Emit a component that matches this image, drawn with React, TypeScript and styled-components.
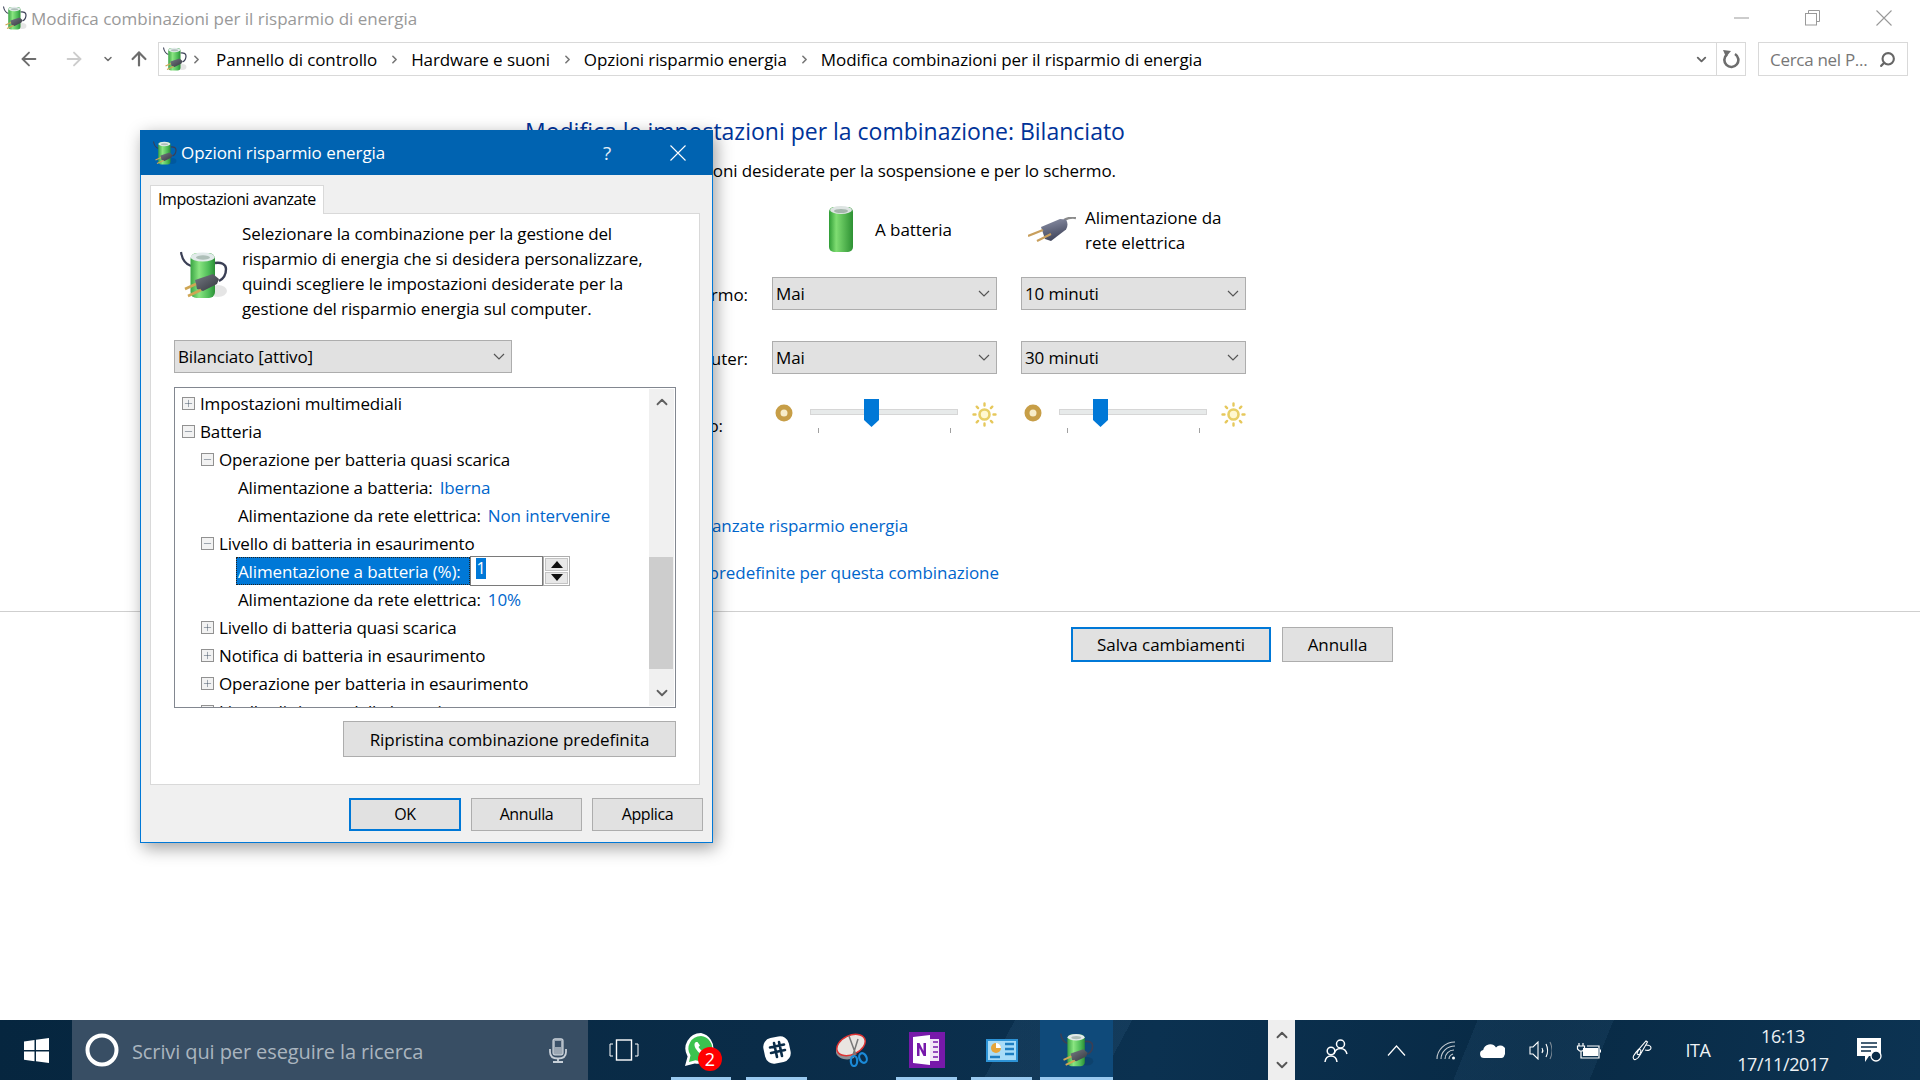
import React from "react";
import styled, { createGlobalStyle } from "styled-components";
import { ArrowLeft, ArrowRight, ArrowUp, ChevronDown, ChevronRight, ChevronUp, Search, Minus, Plus } from "lucide-react";

const Global = createGlobalStyle`
  html, body { margin: 0; padding: 0; background: #fff; }
  body { font-family: "Open Sans", "Noto Sans", sans-serif; color: #000; overflow: hidden; }
  * { box-sizing: border-box; }
`;

const Screen = styled.div`
  position: relative;
  width: 1920px;
  height: 1080px;
  overflow: hidden;
  display: flex;
  flex-direction: column;
  background: #fff;
`;

const ExplorerWindow = styled.div`
  flex: 1;
  min-height: 0;
  display: flex;
  flex-direction: column;
`;

const TitleBar = styled.div`
  height: 36px;
  display: flex;
  align-items: center;
  padding: 0 4px 0 3px;
  gap: 4px;
`;

const TitleText = styled.span`
  font-size: 17px;
  color: #999;
  flex: 1;
`;

const WinCtl = styled.span`
  width: 65px;
  margin-left: 2px;
  display: flex;
  justify-content: center;
`;

const Toolbar = styled.div`
  height: 40px;
  padding-top: 6px;
  display: flex;
  align-items: stretch;
`;

const NavGroup = styled.div`
  width: 158px;
  display: flex;
  align-items: center;
  padding-left: 18px;
`;

const NavSlot = styled.span<{ $w: number; $c?: string }>`
  width: ${(p) => p.$w}px;
  display: flex;
  color: ${(p) => p.$c || "#6d6d6d"};
`;

const Address = styled.div`
  width: 1588px;
  border: 1px solid #d9d9d9;
  display: flex;
  align-items: center;
  padding-left: 4px;
`;

const Crumb = styled.span`
  font-size: 17px;
  letter-spacing: -0.1px;
  margin-right: 11px;
`;

const CrumbSep = styled.span`
  display: flex;
  color: #777;
  margin-right: 10px;
`;

const FirstSep = styled(CrumbSep)`
  margin-left: 3px;
  margin-right: 13px;
`;

const DropSep = styled(CrumbSep)`
  margin-right: 7px;
  color: #666;
`;

const AddressSpacer = styled.span`
  flex: 1;
`;

const RefreshCell = styled.span`
  width: 29px;
  height: 100%;
  border-left: 1px solid #d9d9d9;
  display: flex;
  align-items: center;
  justify-content: center;
`;

const SearchBox = styled.div`
  width: 150px;
  margin-left: 12px;
  border: 1px solid #d9d9d9;
  display: flex;
  align-items: center;
  justify-content: space-between;
  padding: 0 11px;
  font-size: 17px;
  letter-spacing: -0.3px;
  color: #777;
`;

const MirrorIcon = styled.span`
  display: flex;
  transform: scaleX(-1);
  color: #666;
`;

const Content = styled.div`
  padding: 40px 0 0 525px;
  display: flex;
  flex-direction: column;
`;

const Heading = styled.h1`
  margin: 0;
  font-size: 23px;
  line-height: 30px;
  font-weight: 400;
  color: #003399;
`;

const SubHeading = styled.p`
  margin: 13px 0 0;
  font-size: 17px;
  line-height: 24px;
  letter-spacing: -0.12px;
`;

const PlanGrid = styled.div`
  margin: 22px 0 0;
  display: grid;
  grid-template-columns: 223px 225px 225px;
  column-gap: 24px;
  grid-template-rows: 72px 64px 58px 34px;
  align-items: start;
  font-size: 17px;
  letter-spacing: -0.05px;
`;

const RowLabel = styled.div`
  text-align: right;
  height: 33px;
  line-height: 36px;
  white-space: nowrap;
`;

const LowRowLabel = styled(RowLabel)`
  padding-right: 25px;
  margin-top: 9px;
`;

const SourceHead = styled.div`
  display: flex;
  align-items: center;
  height: 48px;
  line-height: 25px;
`;

const IconBox = styled.span<{ $ml: number }>`
  margin-left: ${(p) => p.$ml}px;
  display: flex;
`;

const SourceText = styled.span<{ $ml: number; $mt: number }>`
  margin: ${(p) => p.$mt}px 0 0 ${(p) => p.$ml}px;
`;

const Combo = styled.div<{ $w?: number }>`
  width: ${(p) => (p.$w ? p.$w + "px" : "100%")};
  height: 33px;
  background: #e1e1e1;
  border: 1px solid #adadad;
  display: flex;
  align-items: center;
  justify-content: space-between;
  padding: 0 6px 0 3px;
  font-size: 17px;
  letter-spacing: -0.15px;
  color: #000;
`;

const BrightRow = styled.div`
  display: flex;
  align-items: flex-start;
  height: 34px;
`;

const MoonBox = styled.span`
  display: flex;
  margin: 5px 0 0 3px;
`;

const SunBox = styled.span`
  display: flex;
  margin-top: 3px;
`;

const Track = styled.div`
  position: relative;
  width: 149px;
  height: 6px;
  margin: 10px 14px 0 17px;
  background: #e7eaea;
  border: 1px solid #d6d6d6;
`;

const Thumb = styled.svg<{ $x: number }>`
  position: absolute;
  left: ${(p) => p.$x}px;
  top: -11px;
`;

const Tick = styled.span<{ $x: number }>`
  position: absolute;
  left: ${(p) => p.$x}px;
  top: 18px;
  width: 1px;
  height: 5px;
  background: #a0a0a0;
`;

const LinkLine = styled.a<{ $mt: number }>`
  margin-top: ${(p) => p.$mt}px;
  font-size: 17px;
  line-height: 24px;
  letter-spacing: -0.06px;
  color: #0066cc;
`;

const Divider = styled.div`
  margin-top: 26px;
  height: 1px;
  background: #cfcfcf;
`;

const FooterButtons = styled.div`
  margin: 15px 0 0 1071px;
  display: flex;
  gap: 11px;
`;

const Btn = styled.div<{ $w: number; $h?: number; $primary?: boolean; $small?: boolean }>`
  width: ${(p) => p.$w}px;
  height: ${(p) => p.$h || 33}px;
  background: #e1e1e1;
  border: ${(p) => (p.$primary ? "2px solid #0078d7" : "1px solid #adadad")};
  display: flex;
  align-items: center;
  justify-content: center;
  padding-bottom: ${(p) => (p.$small ? 2 : 0)}px;
  font-size: ${(p) => (p.$small ? 16 : 17)}px;
  letter-spacing: ${(p) => (p.$small ? -0.4 : -0.06)}px;
`;

const Dialog = styled.div`
  position: absolute;
  left: 140px;
  top: 130px;
  width: 573px;
  height: 713px;
  background: #f0f0f0;
  border: 1px solid #0078d7;
  box-shadow: 3px 5px 16px rgba(0, 0, 0, 0.38);
  display: flex;
  flex-direction: column;
`;

const DialogTitle = styled.div`
  height: 45px;
  margin: -1px -1px 0;
  background: #0063b1;
  color: #fff;
  display: flex;
  align-items: center;
  padding-left: 13px;
  gap: 4px;
  flex-shrink: 0;
`;

const DialogTitleText = styled.span`
  font-size: 17px;
  letter-spacing: -0.05px;
  flex: 1;
`;

const DialogHelp = styled.span`
  font-size: 19px;
  width: 20px;
  text-align: center;
  margin-right: 49px;
  color: #e4eef7;
`;

const DialogClose = styled.span`
  display: flex;
  margin-right: 27px;
`;

const TabRow = styled.div`
  margin: 10px 0 0 9px;
  height: 29px;
  display: flex;
  position: relative;
  z-index: 1;
`;

const Tab = styled.div`
  width: 174px;
  height: 29px;
  background: #fff;
  border: 1px solid #d9d9d9;
  border-bottom: none;
  display: flex;
  align-items: center;
  padding: 0 0 3px 7px;
  font-size: 16px;
  letter-spacing: -0.42px;
`;

const TabPanel = styled.div`
  margin: -1px 0 0 9px;
  width: 550px;
  height: 572px;
  background: #fff;
  border: 1px solid #d9d9d9;
  display: flex;
  flex-direction: column;
  padding: 0 23px;
`;

const Intro = styled.div`
  height: 110px;
  margin-top: 7px;
  display: flex;
  align-items: flex-start;
`;

const IntroIcon = styled.div`
  width: 68px;
  padding: 30px 0 0 6px;
  flex-shrink: 0;
`;

const IntroText = styled.p`
  margin: 0;
  font-size: 17px;
  line-height: 25px;
  letter-spacing: -0.11px;
  white-space: nowrap;
`;

const PlanCombo = styled(Combo)`
  margin-top: 9px;
`;

const Tree = styled.div`
  margin-top: 14px;
  height: 321px;
  width: 502px;
  border: 1px solid #828790;
  background: #fff;
  display: flex;
  overflow: hidden;
`;

const TreeList = styled.div`
  flex: 1;
  padding-top: 1px;
  overflow: hidden;
`;

const TreeRow = styled.div<{ $indent: number }>`
  height: 28px;
  display: flex;
  align-items: center;
  padding-left: ${(p) => p.$indent}px;
  font-size: 17px;
  letter-spacing: -0.13px;
  white-space: nowrap;
`;

const Expander = styled.span`
  width: 13px;
  height: 13px;
  border: 1px solid #919191;
  background: #f2f2f2;
  margin-right: 5px;
  display: flex;
  align-items: center;
  justify-content: center;
  color: #34465a;
  flex-shrink: 0;
`;

const Value = styled.span`
  color: #0066cc;
  margin-left: 7px;
`;

const Selected = styled.span`
  background: #0078d7;
  color: #fff;
  outline: 1px dotted #222;
  outline-offset: -1px;
  height: 28px;
  width: 234px;
  margin-left: -2px;
  padding-left: 2px;
  display: flex;
  align-items: center;
`;

const SpinInput = styled.span`
  width: 73px;
  height: 30px;
  border: 1px solid #7a7a7a;
  background: #fff;
  padding: 1px 0 0 5px;
  display: flex;
  align-items: flex-start;
`;

const SelText = styled.span`
  background: #0078d7;
  color: #fff;
  width: 10px;
  height: 21px;
  font-size: 16px;
  line-height: 20px;
  text-align: center;
`;

const Spinner = styled.span`
  width: 27px;
  height: 30px;
  border: 1px solid #adadad;
  padding: 1px;
  display: flex;
  flex-direction: column;
  gap: 1px;
`;

const SpinCell = styled.span`
  flex: 1;
  background: #e8e8e8;
  border: 1px solid #c4c4c4;
  display: flex;
  align-items: center;
  justify-content: center;
`;

const ScrollBar = styled.div`
  width: 25px;
  background: #f0f0f0;
  margin: 1px 1px 1px 0;
  display: flex;
  flex-direction: column;
  align-items: center;
  color: #606060;
`;

const ScrollBtn = styled.span`
  height: 26px;
  display: flex;
  align-items: center;
  justify-content: center;
  flex-shrink: 0;
`;

const ScrollGap = styled.span`
  flex: 1;
  width: 100%;
  padding-top: 142px;
`;

const ScrollThumb = styled.span`
  display: block;
  width: 24px;
  height: 112px;
  background: #cdcdcd;
`;

const RestoreRow = styled.div`
  margin-top: 13px;
  display: flex;
  justify-content: flex-end;
`;

const DialogButtons = styled.div`
  margin: 13px 9px 0 0;
  display: flex;
  justify-content: flex-end;
  gap: 10px;
`;

const Taskbar = styled.div`
  height: 60px;
  flex-shrink: 0;
  background:
    linear-gradient(118deg, transparent 0 52%, rgba(70, 120, 160, 0.14) 52% 58%, transparent 58% 100%),
    linear-gradient(112deg, transparent 0 76%, rgba(70, 120, 160, 0.12) 76% 83%, transparent 83% 100%),
    linear-gradient(100deg, #06263f 0%, #0a2c48 40%, #0b3150 60%, #082a45 80%, #0c3352 100%);
  display: flex;
  align-items: center;
  color: #fff;
  position: relative;
`;

const StartCell = styled.div`
  width: 72px;
  display: flex;
  justify-content: center;
`;

const SearchField = styled.div`
  width: 516px;
  height: 60px;
  background: #384e64;
  display: flex;
  align-items: center;
  padding-left: 13px;
`;

const SearchText = styled.span`
  margin: 2px 0 0 13px;
  font-size: 20px;
  letter-spacing: -0.1px;
  color: #aab5bf;
  flex: 1;
`;

const MicCell = styled.span`
  display: flex;
  margin-right: 21px;
`;

const TaskSlot = styled.div<{ $w: number; $on?: boolean; $line?: boolean }>`
  position: relative;
  width: ${(p) => p.$w}px;
  height: 60px;
  display: flex;
  align-items: center;
  justify-content: center;
  flex-shrink: 0;
  background: ${(p) => (p.$on ? "#0f4a7a" : "transparent")};
  ${(p) =>
    p.$line
      ? `&::after { content: ""; position: absolute; left: 0; right: 0; bottom: 0; height: 3px; background: #99c9ef; }`
      : ""}
`;

const Badge = styled.span`
  position: absolute;
  left: 27px;
  top: 27px;
  width: 24px;
  height: 24px;
  border-radius: 50%;
  background: #f00;
  color: #fff;
  font-size: 18px;
  line-height: 24px;
  text-align: center;
`;

const ScrollStrip = styled.div`
  width: 27px;
  height: 60px;
  margin-left: 155px;
  background: #eee;
  display: flex;
  flex-direction: column;
  align-items: center;
  justify-content: space-between;
  padding: 6px 0;
  color: #555;
  flex-shrink: 0;
`;

const Tray = styled.div`
  flex: 1;
  display: flex;
  align-items: center;
  color: #eef2f5;
  height: 60px;
  padding-left: 11px;
`;

const TrayIcon = styled.span<{ $w: number }>`
  width: ${(p) => p.$w}px;
  display: flex;
  justify-content: center;
  flex-shrink: 0;
`;

const TrayText = styled.span`
  font-size: 18px;
  letter-spacing: -0.5px;
`;

const Clock = styled.div`
  width: 112px;
  flex-shrink: 0;
  text-align: center;
  font-size: 18px;
  line-height: 28px;
  letter-spacing: -0.4px;
`;

const PowerIcon = ({ size = 24, id }: { size?: number; id: string }) => (
  <svg width={size} height={size} viewBox="0 0 48 48">
    <defs>
      <linearGradient id={id} x1="0" x2="1" y1="0" y2="0">
        <stop offset="0" stopColor="#3aa544" />
        <stop offset="0.35" stopColor="#8ae581" />
        <stop offset="0.75" stopColor="#4dbb57" />
        <stop offset="1" stopColor="#2c8f36" />
      </linearGradient>
      <linearGradient id={`${id}p`} x1="0" x2="1" y1="0" y2="1">
        <stop offset="0" stopColor="#777b84" />
        <stop offset="1" stopColor="#33363e" />
      </linearGradient>
    </defs>
    <ellipse cx="38" cy="40" rx="9" ry="6" fill="#000" opacity="0.1" />
    <path d="M1 1c1 7 4 12 10 14" fill="none" stroke="#3a3f55" strokeWidth="2.2" />
    <path d="M35 12c6-1 11 1 11 6 0 6-3 10-7 12" fill="none" stroke="#3a3f55" strokeWidth="2.4" />
    <rect x="10.500" y="2" width="24.500" height="45" rx="6" fill={`url(#${id})`} />
    <ellipse cx="22.700" cy="6" rx="12" ry="4.500" fill="#e2eaea" />
    <ellipse cx="23" cy="6.500" rx="7" ry="2.200" fill="#aebfb8" />
    <path d="M15 29l18-6 6 5-2 5-14 7-6-2z" fill={`url(#${id}p)`} />
    <path d="M5 38l11-5M8 45l13-6" stroke="#cfa654" strokeWidth="2.600" />
  </svg>
);

const BigBattery = () => (
  <svg width="26" height="48" viewBox="0 0 26 48">
    <defs>
      <linearGradient id="bigbat" x1="0" x2="1" y1="0" y2="0">
        <stop offset="0" stopColor="#2e9c35" />
        <stop offset="0.3" stopColor="#7fdd72" />
        <stop offset="1" stopColor="#2d9133" />
      </linearGradient>
    </defs>
    <rect x="1" y="2" width="24" height="45" rx="5" fill="url(#bigbat)" />
    <ellipse cx="13" cy="5" rx="11" ry="4" fill="#dde4e2" />
    <ellipse cx="13" cy="6" rx="7" ry="2" fill="#a5b6ac" />
  </svg>
);

const BigPlug = () => (
  <svg width="48" height="25" viewBox="0 0 48 25">
    <defs>
      <linearGradient id="plugbody" x1="0.2" x2="0.5" y1="0" y2="1">
        <stop offset="0" stopColor="#8a8fa5" />
        <stop offset="1" stopColor="#3d4258" />
      </linearGradient>
    </defs>
    <path d="M36 3c4-2 8-3 12-2" stroke="#8b8b8b" strokeWidth="2.400" fill="none" />
    <path d="M13 10L32 2l6 .5c2 3 2 7 0 10L23 24l-6-2z" fill="url(#plugbody)" />
    <path d="M0 19l15-6M9 24l14-7" stroke="#c89f5d" strokeWidth="2.200" />
  </svg>
);

const Moon = () => (
  <svg width="18" height="18" viewBox="0 0 18 18">
    <circle cx="9" cy="9" r="6" fill="#f7edc9" stroke="#c79e47" strokeWidth="5" />
  </svg>
);

const Sun = () => (
  <svg width="25" height="25" viewBox="0 0 25 25">
    <g stroke="#e6c85c" strokeWidth="2.400" strokeLinecap="round">
      <path d="M12.500 1.500v2M12.500 21.500v2M1.500 12.500h2M21.500 12.500h2M4.700 4.700l1.400 1.400M18.900 18.900l1.400 1.400M4.700 20.300l1.400-1.400M18.900 6.100l1.400-1.400" />
    </g>
    <circle cx="12.500" cy="12.500" r="5" fill="#fff8d0" stroke="#e8cf66" strokeWidth="2.600" />
  </svg>
);

const Slider = ({ x }: { x: number }) => (
  <BrightRow>
    <MoonBox><Moon /></MoonBox>
    <Track>
      <Thumb $x={x} width="15" height="28" viewBox="0 0 15 28">
        <path d="M0 0h15v21l-7.500 7L0 21z" fill="#0078d7" />
      </Thumb>
      <Tick $x={7} />
      <Tick $x={139} />
    </Track>
    <SunBox><Sun /></SunBox>
  </BrightRow>
);

const ComboChevron = () => (
  <svg width="12" height="7" viewBox="0 0 12 7">
    <path d="M1 1l5 5 5-5" fill="none" stroke="#555" strokeWidth="1.200" />
  </svg>
);

const CrossGlyph = ({ color }: { color: string }) => (
  <svg width="16" height="16" viewBox="0 0 16 16">
    <path d="M.5.500l15 15M15.500.500l-15 15" stroke={color} strokeWidth="1.100" fill="none" />
  </svg>
);

const MinGlyph = () => (
  <svg width="15" height="16" viewBox="0 0 15 16">
    <path d="M0 8h15" stroke="#999" />
  </svg>
);

const RestoreGlyph = () => (
  <svg width="15" height="16" viewBox="0 0 15 16" fill="none" stroke="#999">
    <rect x=".5" y="3.500" width="11" height="11.500" />
    <path d="M3.500 3.500V.5h11v11h-3" />
  </svg>
);

const RefreshGlyph = () => (
  <svg width="18" height="20" viewBox="0 0 18 20" fill="none">
    <path d="M5 5.500A7 7 0 1 0 13 5" stroke="#6d6d6d" strokeWidth="2.600" />
    <path d="M1 1l8 1-5 6z" fill="#6d6d6d" />
  </svg>
);

const WinLogo = () => (
  <svg width="25" height="25" viewBox="0 0 25 25" fill="#fff">
    <path d="M0 3.500L10.500 2v10H0zM12 1.800L25 0v12H12zM0 13.500h10.500v9.700L0 21.700zM12 13.500h13V25l-13-1.800z" />
  </svg>
);

const MicGlyph = () => (
  <svg width="18" height="25" viewBox="0 0 18 25">
    <rect x="4" y="0.800" width="10" height="16" rx="2" fill="#9aa6b2" stroke="#c8d0d8" strokeWidth="1.200" />
    <rect x="6" y="3" width="6" height="6" fill="#3b5168" />
    <path d="M1 11v3c0 4 3 6.500 8 6.500s8-2.500 8-6.500v-3" fill="none" stroke="#c8d0d8" strokeWidth="1.800" />
    <path d="M9 20.500V24M4 24h10" stroke="#c8d0d8" strokeWidth="1.800" />
  </svg>
);

const TaskView = () => (
  <svg width="30" height="22" viewBox="0 0 30 22" fill="none" stroke="#fff" strokeWidth="1.400">
    <rect x="7.500" y="1" width="15" height="20" />
    <path d="M4 5H1v12h3M26 5h3v12h-3" strokeWidth="1" />
  </svg>
);

const Whatsapp = () => (
  <svg width="34" height="36" viewBox="0 0 34 36">
    <path d="M17 1a15.500 15.500 0 0 0-13.400 23.400L1 34l9.800-2.600A15.500 15.500 0 1 0 17 1z" fill="#fff" />
    <path d="M17 4a12.500 12.500 0 0 0-10.500 19.300L5 30l6.500-1.800A12.500 12.500 0 1 0 17 4z" fill="#3cc34f" />
    <path d="M12 10c-2 1-2 4 0 7s5 6 8 6 4-2 4-3l-3.500-2-1.500 1.500c-2-1-3.500-2.800-4.500-4.500l1.500-1.500L13.500 10z" fill="#fff" />
  </svg>
);

const Slack = () => (
  <svg width="28" height="28" viewBox="0 0 28 28">
    <rect x="1" y="1" width="26" height="26" rx="9" fill="#fff" transform="rotate(-12 14 14)" />
    <path d="M11 7l3 14M16 6l3 14M7 11.500l14-3M8 17l14-3" stroke="#0a2c48" strokeWidth="2.600" strokeLinecap="round" />
  </svg>
);

const Snip = () => (
  <svg width="34" height="34" viewBox="0 0 34 34">
    <path d="M1 15c4 6 12 8 20 4l-2 6c-7 3-16 1-18-5z" fill="#8d9196" />
    <ellipse cx="16" cy="12" rx="15" ry="9.500" fill="#e9e5e1" stroke="#d33" strokeWidth="1.500" transform="rotate(-25 16 12)" />
    <path d="M14 3l7 19M23 6l-5 16" stroke="#777" strokeWidth="1.500" />
    <ellipse cx="19" cy="28" rx="3.200" ry="5" fill="none" stroke="#1b8ad8" strokeWidth="2.200" />
    <ellipse cx="28" cy="25" rx="3.500" ry="5" fill="none" stroke="#1b8ad8" strokeWidth="2.200" transform="rotate(-25 28 25)" />
  </svg>
);

const OneNote = () => (
  <svg width="36" height="36" viewBox="0 0 36 36">
    <rect width="36" height="36" fill="#7719aa" />
    <path d="M4 5l17-2v30L4 31z" fill="#fff" />
    <rect x="21" y="7" width="9" height="22" fill="#f1e6f7" />
    <path d="M24 10h5M24 15h5M24 20h5M24 25h5" stroke="#7719aa" strokeWidth="1.600" />
    <path d="M8 24V11h2.500l4 8v-8H17v13h-2.500l-4-8v8z" fill="#7719aa" />
  </svg>
);

const ControlPanel = () => (
  <svg width="32" height="23" viewBox="0 0 32 23">
    <rect width="32" height="23" fill="#2d93d6" />
    <rect x="2" y="2" width="28" height="19" fill="#a8dcf8" />
    <circle cx="10" cy="9" r="5" fill="#e6a53a" />
    <path d="M10 9V4a5 5 0 0 1 5 5z" fill="#fff" />
    <path d="M19 5h9M19 10h9M19 15h9M4 18h10" stroke="#1f7fc2" strokeWidth="2.400" />
  </svg>
);

const People = () => (
  <svg width="24" height="25" viewBox="0 0 24 25" fill="none" stroke="#fff" strokeWidth="1.500">
    <circle cx="16.500" cy="6" r="4" />
    <path d="M10 16c1-4 3-5.500 6.500-5.500S22 12 23 16" />
    <circle cx="7" cy="13" r="3.800" />
    <path d="M1 24c.5-4 2.500-6 6-6s5.500 2 6 6" />
  </svg>
);

const TrayChevron = () => (
  <svg width="19" height="11" viewBox="0 0 19 11">
    <path d="M1 10.500L9.500 1 18 10.500" fill="none" stroke="#fff" strokeWidth="1.200" />
  </svg>
);

const WifiTray = () => (
  <svg width="20" height="19" viewBox="0 0 20 19" fill="none" stroke="#c5ccd2" strokeWidth="1.100">
    <path d="M1 18C1 9 9 1 19 1M5 18c0-7 6-13 14-13M9 18c0-5 4-9 9-9M13 18c0-2 1.500-4 4-5" />
    <circle cx="17.500" cy="17" r="1.500" fill="#fff" stroke="none" />
  </svg>
);

const CloudTray = () => (
  <svg width="25" height="16" viewBox="0 0 25 16" fill="#fff">
    <path d="M4 16a4 4 0 0 1-.8-7.900A7 7 0 0 1 16 5.500 5.500 5.500 0 0 1 24.500 13c-.3 1.700-1.500 3-3 3z" />
  </svg>
);

const VolumeTray = () => (
  <svg width="23" height="19" viewBox="0 0 23 19" fill="none" stroke="#fff" strokeWidth="1.100">
    <path d="M1 6h3l5-5v17l-5-5H1z" />
    <path d="M13 7c1 1.500 1 3.500 0 5" />
    <path d="M17 3c2 4 2 9 0 13" />
    <path d="M21 1c2.500 5 2.500 12 0 17" stroke="#7c8a96" />
  </svg>
);

const BatteryTray = () => (
  <svg width="25" height="17" viewBox="0 0 25 17" fill="none" stroke="#fff" strokeWidth="1.200">
    <path d="M3 1v3M7 1v3M1.500 4h7v3l-2 2H3.500l-2-2zM5 9v7h18V4H11" />
    <rect x="7" y="6" width="15" height="8" fill="#fff" stroke="none" />
    <path d="M24.500 7.500v3" />
  </svg>
);

const PenTray = () => (
  <svg width="20" height="21" viewBox="0 0 20 21" fill="none" stroke="#fff" strokeWidth="1.100">
    <path d="M14 1l1.500 1L8 15c-1 2-3 4-4.500 4.500S.5 18 1.500 16 5 11 7 9z" />
    <path d="M6 11c0-2 3-2 3 0l-1 3c-1 1-3 1-3-1zM14 5c3 0 5 1 5 3s-3 3-6 2" />
  </svg>
);

const NotifyTray = () => (
  <svg width="26" height="25" viewBox="0 0 26 25">
    <path d="M0 0h24v18H12l-4 6v-6H0z" fill="#fff" />
    <path d="M4 5h16M4 9h16M4 13h10" stroke="#0a2c48" strokeWidth="1.300" />
    <circle cx="19" cy="18" r="5" fill="#0a2c48" stroke="#fff" strokeWidth="1.300" />
  </svg>
);

const Expand = ({ open }: { open?: boolean }) => (
  <Expander>{open ? <Minus size={11} strokeWidth={1} /> : <Plus size={11} strokeWidth={1} />}</Expander>
);

const Caret = ({ up }: { up?: boolean }) => (
  <svg width="12" height="7" viewBox="0 0 12 7">
    <path d={up ? "M6 0l6 7H0z" : "M0 0h12L6 7z"} fill="#111" />
  </svg>
);

export default function App() {
  return (
    <Screen>
      <Global />
      <ExplorerWindow>
        <TitleBar>
          <PowerIcon id="p1" size={24} />
          <TitleText>Modifica combinazioni per il risparmio di energia</TitleText>
          <WinCtl><MinGlyph /></WinCtl>
          <WinCtl><RestoreGlyph /></WinCtl>
          <WinCtl><CrossGlyph color="#999" /></WinCtl>
        </TitleBar>
        <Toolbar>
          <NavGroup>
            <NavSlot $w={45}><ArrowLeft size={22} strokeWidth={2} /></NavSlot>
            <NavSlot $w={39} $c="#ccc"><ArrowRight size={22} strokeWidth={2} /></NavSlot>
            <NavSlot $w={26}><ChevronDown size={12} strokeWidth={3} /></NavSlot>
            <NavSlot $w={22}><ArrowUp size={22} strokeWidth={2.4} /></NavSlot>
          </NavGroup>
          <Address>
            <PowerIcon id="p2" size={24} />
            <FirstSep><ChevronRight size={13} strokeWidth={3} /></FirstSep>
            <Crumb>Pannello di controllo</Crumb>
            <CrumbSep><ChevronRight size={13} strokeWidth={3} /></CrumbSep>
            <Crumb>Hardware e suoni</Crumb>
            <CrumbSep><ChevronRight size={13} strokeWidth={3} /></CrumbSep>
            <Crumb>Opzioni risparmio energia</Crumb>
            <CrumbSep><ChevronRight size={13} strokeWidth={3} /></CrumbSep>
            <Crumb>Modifica combinazioni per il risparmio di energia</Crumb>
            <AddressSpacer />
            <DropSep><ChevronDown size={15} strokeWidth={3} /></DropSep>
            <RefreshCell><RefreshGlyph /></RefreshCell>
          </Address>
          <SearchBox>
            Cerca nel P...
            <MirrorIcon><Search size={17} strokeWidth={3} /></MirrorIcon>
          </SearchBox>
        </Toolbar>
        <Content>
          <Heading>Modifica le impostazioni per la combinazione: Bilanciato</Heading>
          <SubHeading>Selezionare le impostazioni desiderate per la sospensione e per lo schermo.</SubHeading>
          <PlanGrid>
            <span />
            <SourceHead><IconBox $ml={56}><BigBattery /></IconBox><SourceText $ml={21} $mt={0}>A batteria</SourceText></SourceHead>
            <SourceHead><IconBox $ml={7}><BigPlug /></IconBox><SourceText $ml={9} $mt={2}>Alimentazione da<br />rete elettrica</SourceText></SourceHead>
            <RowLabel>Spegni lo schermo:</RowLabel>
            <Combo>Mai<ComboChevron /></Combo>
            <Combo>10 minuti<ComboChevron /></Combo>
            <RowLabel>Sospensione computer:</RowLabel>
            <Combo>Mai<ComboChevron /></Combo>
            <Combo>30 minuti<ComboChevron /></Combo>
            <LowRowLabel>Luminosità schermo:</LowRowLabel>
            <Slider x={53} />
            <Slider x={33} />
          </PlanGrid>
          <LinkLine $mt={81}>Cambia impostazioni avanzate risparmio energia</LinkLine>
          <LinkLine $mt={23}>Ripristina impostazioni predefinite per questa combinazione</LinkLine>
        </Content>
        <Divider />
        <FooterButtons>
          <Btn $w={200} $h={35} $primary>Salva cambiamenti</Btn>
          <Btn $w={111} $h={35}>Annulla</Btn>
        </FooterButtons>
      </ExplorerWindow>

      <Dialog>
        <DialogTitle>
          <PowerIcon id="p3" size={24} />
          <DialogTitleText>Opzioni risparmio energia</DialogTitleText>
          <DialogHelp>?</DialogHelp>
          <DialogClose><CrossGlyph color="#fff" /></DialogClose>
        </DialogTitle>
        <TabRow><Tab>Impostazioni avanzate</Tab></TabRow>
        <TabPanel>
          <Intro>
            <IntroIcon><PowerIcon id="p4" size={48} /></IntroIcon>
            <IntroText>
              Selezionare la combinazione per la gestione del<br />
              risparmio di energia che si desidera personalizzare,<br />
              quindi scegliere le impostazioni desiderate per la<br />
              gestione del risparmio energia sul computer.
            </IntroText>
          </Intro>
          <PlanCombo $w={338}>Bilanciato [attivo]<ComboChevron /></PlanCombo>
          <Tree>
            <TreeList>
              <TreeRow $indent={7}><Expand />Impostazioni multimediali</TreeRow>
              <TreeRow $indent={7}><Expand open />Batteria</TreeRow>
              <TreeRow $indent={26}><Expand open />Operazione per batteria quasi scarica</TreeRow>
              <TreeRow $indent={63}>Alimentazione a batteria:<Value>Iberna</Value></TreeRow>
              <TreeRow $indent={63}>Alimentazione da rete elettrica:<Value>Non intervenire</Value></TreeRow>
              <TreeRow $indent={26}><Expand open />Livello di batteria in esaurimento</TreeRow>
              <TreeRow $indent={63}>
                <Selected>Alimentazione a batteria (%):</Selected>
                <SpinInput><SelText>1</SelText></SpinInput>
                <Spinner>
                  <SpinCell><Caret up /></SpinCell>
                  <SpinCell><Caret /></SpinCell>
                </Spinner>
              </TreeRow>
              <TreeRow $indent={63}>Alimentazione da rete elettrica:<Value>10%</Value></TreeRow>
              <TreeRow $indent={26}><Expand />Livello di batteria quasi scarica</TreeRow>
              <TreeRow $indent={26}><Expand />Notifica di batteria in esaurimento</TreeRow>
              <TreeRow $indent={26}><Expand />Operazione per batteria in esaurimento</TreeRow>
              <TreeRow $indent={26}><Expand />Livello di riserva della batteria</TreeRow>
            </TreeList>
            <ScrollBar>
              <ScrollBtn><ChevronUp size={18} strokeWidth={2.4} /></ScrollBtn>
              <ScrollGap><ScrollThumb /></ScrollGap>
              <ScrollBtn><ChevronDown size={18} strokeWidth={2.4} /></ScrollBtn>
            </ScrollBar>
          </Tree>
          <RestoreRow><Btn $w={333} $h={36}>Ripristina combinazione predefinita</Btn></RestoreRow>
        </TabPanel>
        <DialogButtons>
          <Btn $w={112} $primary $small>OK</Btn>
          <Btn $w={111} $small>Annulla</Btn>
          <Btn $w={111} $small>Applica</Btn>
        </DialogButtons>
      </Dialog>

      <Taskbar>
        <StartCell><WinLogo /></StartCell>
        <SearchField>
          <svg width="34" height="34" viewBox="0 0 34 34" fill="none">
            <circle cx="17" cy="17" r="14.500" stroke="#fff" strokeWidth="4" />
          </svg>
          <SearchText>Scrivi qui per eseguire la ricerca</SearchText>
          <MicCell><MicGlyph /></MicCell>
        </SearchField>
        <TaskSlot $w={72}><TaskView /></TaskSlot>
        <TaskSlot $w={11} />
        <TaskSlot $w={60} $line><Whatsapp /><Badge>2</Badge></TaskSlot>
        <TaskSlot $w={15} />
        <TaskSlot $w={61} $line><Slack /></TaskSlot>
        <TaskSlot $w={89}><Snip /></TaskSlot>
        <TaskSlot $w={61} $line><OneNote /></TaskSlot>
        <TaskSlot $w={14} />
        <TaskSlot $w={61} $line><ControlPanel /></TaskSlot>
        <TaskSlot $w={8} />
        <TaskSlot $w={73} $on $line><PowerIcon id="p5" size={34} /></TaskSlot>
        <ScrollStrip>
          <ChevronUp size={18} strokeWidth={2.5} />
          <ChevronDown size={18} strokeWidth={2.5} />
        </ScrollStrip>
        <Tray>
          <TrayIcon $w={60}><People /></TrayIcon>
          <TrayIcon $w={60}><TrayChevron /></TrayIcon>
          <TrayIcon $w={39}><WifiTray /></TrayIcon>
          <TrayIcon $w={54}><CloudTray /></TrayIcon>
          <TrayIcon $w={42}><VolumeTray /></TrayIcon>
          <TrayIcon $w={54}><BatteryTray /></TrayIcon>
          <TrayIcon $w={54}><PenTray /></TrayIcon>
          <TrayIcon $w={58}><TrayText>ITA</TrayText></TrayIcon>
          <Clock>16:13<br />17/11/2017</Clock>
          <TrayIcon $w={62}><NotifyTray /></TrayIcon>
        </Tray>
      </Taskbar>
    </Screen>
  );
}
